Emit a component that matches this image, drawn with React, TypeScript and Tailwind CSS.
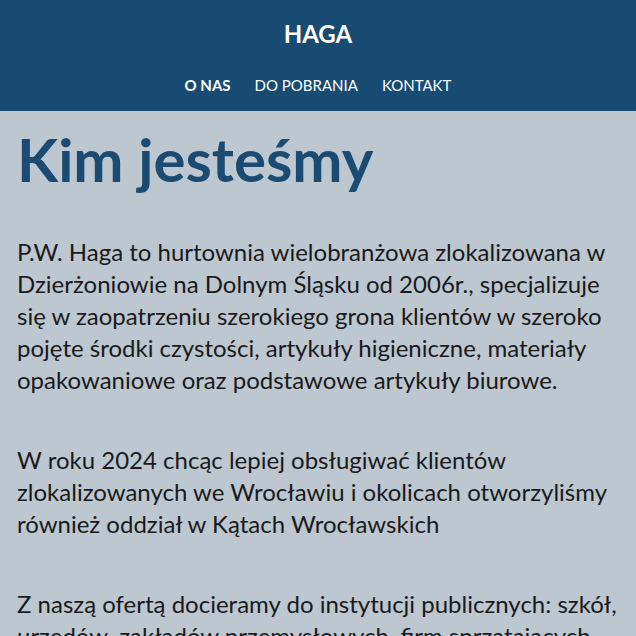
export default function App() {
  return (
    <div className="min-h-screen bg-[#bdc7d0]" style={{ fontFamily: 'Lato, "Noto Sans", sans-serif' }}>
      {/* Header */}
      <header className="bg-[#174b72] h-[111px] flex flex-col items-center text-white">
        <h1 className="mt-[19px] text-[24px] leading-[29px] font-bold">HAGA</h1>
        <nav className="mt-[28px] flex gap-6 text-[15px] leading-[18px] uppercase">
          <a className="font-bold">O nas</a>
          <a>Do pobrania</a>
          <a>Kontakt</a>
        </nav>
      </header>

      <main className="px-[17px]">
        <h2 className="mt-[12px] mb-[41px] text-[60px] leading-[1.2] font-bold text-[#1b4b72]">
          Kim jesteśmy
        </h2>
        <div className="text-[24px] leading-[32px] text-[#1a1a1a]">
          <p className="mb-12">
            P.W. Haga to hurtownia wielobranżowa zlokalizowana w Dzierżoniowie na Dolnym Śląsku od 2006r.,
            specjalizuje się w zaopatrzeniu szerokiego grona klientów w szeroko pojęte środki czystości,
            artykuły higieniczne, materiały opakowaniowe oraz podstawowe artykuły biurowe.
          </p>
          <p className="mb-12">
            W roku 2024 chcąc lepiej obsługiwać klientów zlokalizowanych we Wrocławiu i okolicach
            otworzyliśmy również oddział w Kątach Wrocławskich
          </p>
          <p className="mb-12">
            Z naszą ofertą docieramy do instytucji publicznych: szkół, urzędów, zakładów przemysłowych,
            firm sprzątających oraz wielu innych odbiorców.
          </p>
        </div>
      </main>
    </div>
  )
}
